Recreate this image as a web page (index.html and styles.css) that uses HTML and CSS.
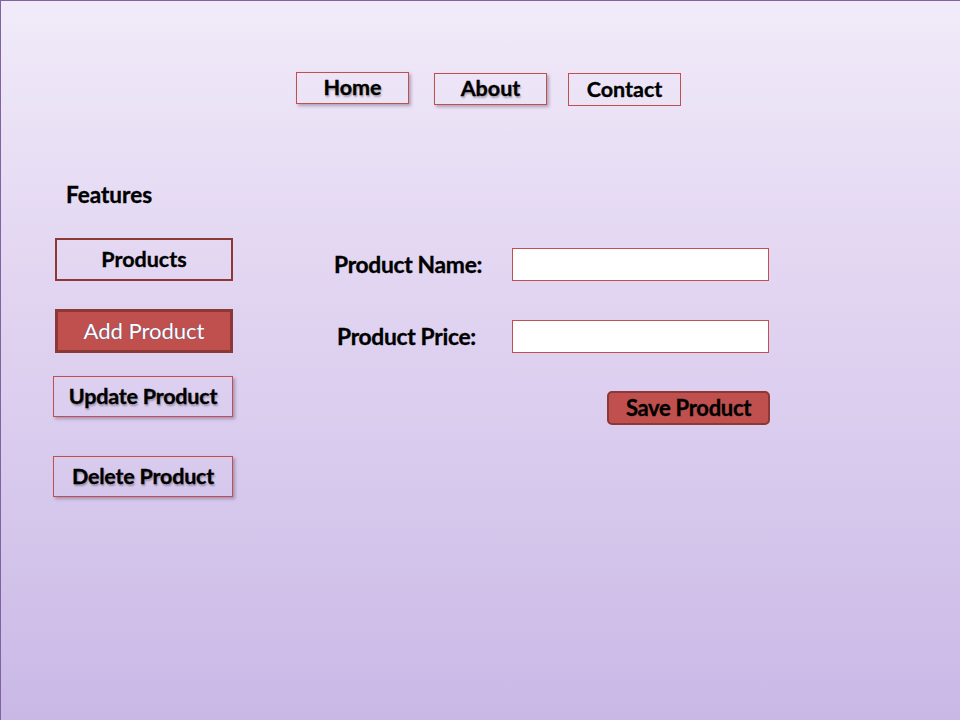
FILE: index.html
```html
<!DOCTYPE html>
<html>
<head>
<meta charset="utf-8">
<link rel="stylesheet" href="styles.css">
</head>
<body>
<div class="page">
  <nav class="nav">
    <a class="nav-btn nav-home shadow">Home</a>
    <a class="nav-btn nav-about shadow">About</a>
    <a class="nav-btn nav-contact">Contact</a>
  </nav>
  <div class="main">
    <aside class="side">
      <div class="side-title">Features</div>
      <div class="side-btn products">Products</div>
      <div class="side-btn add">Add Product</div>
      <div class="side-btn update shadow">Update Product</div>
      <div class="side-btn delete shadow">Delete Product</div>
    </aside>
    <section class="form">
      <div class="row row-name">
        <label class="lbl lbl-name">Product Name:</label>
        <div class="input"></div>
      </div>
      <div class="row row-price">
        <label class="lbl lbl-price">Product Price:</label>
        <div class="input"></div>
      </div>
      <div class="actions">
        <div class="save">Save Product</div>
      </div>
    </section>
  </div>
</div>
</body>
</html>
```
FILE: styles.css
```css
html, body { margin: 0; padding: 0; }
body {
  font-family: "Lato", "Open Sans", sans-serif;
  color: #000;
}
.page {
  width: 959px;
  height: 719px;
  border-top: 1px solid #8064a2;
  border-left: 1px solid #8064a2;
  background: linear-gradient(to bottom, #f1ebf9 0%, #e3d7f2 35%, #d8caed 65%, #c9b8e6 100%);
  overflow: hidden;
}
.shadow { box-shadow: 2px 2px 3px rgba(60, 40, 80, 0.35); }
.nav {
  display: flex;
  align-items: flex-start;
  padding-top: 71px;
  padding-left: 295px;
}
.nav-btn {
  box-sizing: border-box;
  width: 113px;
  height: 32px;
  border: 1px solid #c0504d;
  display: flex;
  align-items: center;
  justify-content: center;
  font-weight: 700;
  -webkit-text-stroke: 0.35px #000;
  font-size: 21.5px;
  padding-bottom: 2px;
  text-shadow: 1px 2px 2px rgba(0,0,0,0.3);
}
.nav-about { margin-left: 25px; margin-top: 1px; }
.nav-contact { margin-left: 21px; margin-top: 1px; height: 33px; text-shadow: none; }

.main {
  display: flex;
  margin-top: 76px;
}
.side {
  width: 180px;
  margin-left: 52px;
  display: flex;
  flex-direction: column;
}
.side-title {
  font-weight: 700;
  -webkit-text-stroke: 0.35px #000;
  font-size: 22.5px;
  line-height: 22px;
  margin-left: 13px;
  margin-top: 2px;
}
.side-btn {
  box-sizing: border-box;
  display: flex;
  align-items: center;
  justify-content: center;
  font-size: 21.5px;
  font-weight: 700;
  -webkit-text-stroke: 0.35px #000;
  padding-bottom: 2px;
}
.products {
  margin-top: 32px;
  margin-left: 2px;
  width: 178px;
  height: 43px;
  border: 2px solid #8c3836;
}
.add {
  margin-top: 28px;
  margin-left: 2px;
  width: 178px;
  height: 44px;
  background: #c0504d;
  border: 3px solid #8c3836;
  color: #fff;
  font-weight: 400;
  -webkit-text-stroke: 0;
  font-size: 22px;
  text-shadow: 0 0 1px #3b5f9a;
}
.update, .delete {
  width: 180px;
  height: 41px;
  border: 1px solid #c0504d;
  text-shadow: 1px 2px 2px rgba(0,0,0,0.3);
}
.update { margin-top: 23px; letter-spacing: -0.2px; }
.delete { margin-top: 39px; letter-spacing: -0.2px; }

.form {
  margin-left: 101px;
  width: 438px;
  display: flex;
  flex-direction: column;
}
.row {
  display: flex;
  align-items: center;
  height: 33px;
}
.row-name { margin-top: 66px; }
.row-price { margin-top: 39px; }
.lbl {
  font-weight: 700;
  -webkit-text-stroke: 0.35px #000;
  font-size: 22.8px;
  letter-spacing: -0.3px;
  padding-bottom: 2px;
}
.lbl-name { padding-left: 0; width: 178px; }
.lbl-price { padding-left: 3px; width: 175px; }
.input {
  box-sizing: border-box;
  width: 257px;
  height: 33px;
  background: #fff;
  border: 1px solid #c0504d;
}
.actions {
  display: flex;
  justify-content: flex-end;
  margin-top: 38px;
}
.save {
  box-sizing: border-box;
  width: 163px;
  height: 34px;
  background: #c0504d;
  border: 2px solid #8c3836;
  border-radius: 5px;
  display: flex;
  align-items: center;
  justify-content: center;
  font-weight: 700;
  -webkit-text-stroke: 0.35px #000;
  font-size: 22px;
  letter-spacing: -0.3px;
  padding-bottom: 2px;
  margin-right: 2px;
}
```
